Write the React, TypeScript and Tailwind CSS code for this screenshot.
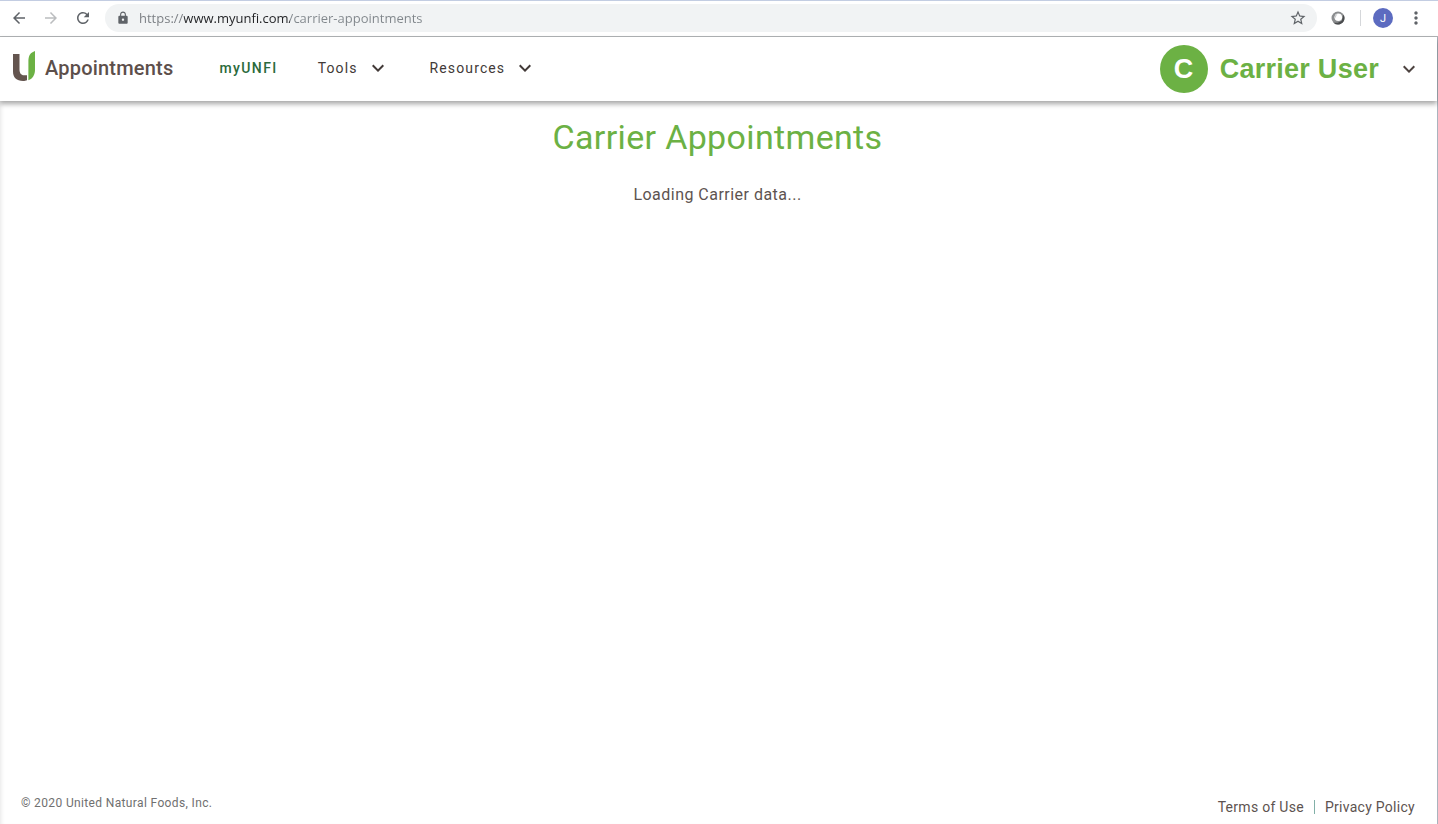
import {
  MdArrowBack,
  MdArrowForward,
  MdKeyboardArrowDown,
  MdLock,
  MdMoreVert,
  MdRefresh,
  MdStarBorder,
} from "react-icons/md";

// Two-leaf "U" mark
const Logo = () => (
  <svg width="24" height="34" viewBox="0 1 24 34" aria-hidden="true">
    <path
      d="M1 4h6.500v15.500c0 3.400 1.500 5.800 4.500 5.800h3v4.900c-1.200.5-2.300.8-4 .8C4.600 31 1 27.500 1 21.500z"
      fill="#64554f"
    />
    <path
      d="M23 1v18.500c0 5.500-2.200 9-6.600 10.800V11C16.400 5.500 18.500 2.500 23 1z"
      fill="#6cb144"
    />
  </svg>
);

const Extension = () => (
  <svg width="14" height="14" viewBox="0 0 14 14" aria-hidden="true">
    <circle cx="7" cy="7" r="6.500" fill="#8b8d8f" />
    <path d="M2.500 11.700A6.500 6.500 0 0 0 13.400 6l-1-2.500-1.600 6.300-4 2z" fill="#4a4c4e" />
    <circle cx="7.300" cy="6.200" r="3.800" fill="#fff" />
    <path d="M4 7.500l2.500-4.800A3.800 3.800 0 0 0 4 7.500z" fill="#c8cacc" />
  </svg>
);

// Address bar and browser buttons
const BrowserBar = () => (
  <div className="flex h-[37px] items-center border-t border-b border-t-[#c3cde2] border-b-[#b0b3b5] bg-white pb-px pl-2.5 pr-3 text-[#5f6368]">
    <div className="flex gap-3.5">
      <button aria-label="Back">
        <MdArrowBack className="size-[18px]" />
      </button>
      <button aria-label="Forward" className="text-[#bbbdbf]">
        <MdArrowForward className="size-[18px]" />
      </button>
      <button aria-label="Reload">
        <MdRefresh className="size-[18px]" />
      </button>
    </div>
    <div className="ml-[13px] flex h-7 flex-1 items-center rounded-full bg-[#f1f3f4] pl-[11px] pr-2.5">
      <MdLock className="size-3.5" />
      <input
        aria-label="Address"
        defaultValue="https://www.myunfi.com/carrier-appointments"
        className="ml-[9px] h-5 flex-1 bg-[linear-gradient(to_right,#777b80_45px,#202124_45px,#202124_151px,#80868b_151px)] bg-clip-text font-['Open_Sans',sans-serif] text-[13px] text-transparent outline-none"
      />
      <button aria-label="Bookmark">
        <MdStarBorder className="size-[18px]" />
      </button>
    </div>
    <button aria-label="Extension" className="ml-3.5">
      <Extension />
    </button>
    <div className="ml-[15px] mr-3 h-4 w-px bg-[#d5d7da]" />
    <button className="grid size-5 place-items-center rounded-full bg-[#5c6bc0] text-[11px] leading-none text-white">
      J
    </button>
    <button aria-label="Menu" className="ml-[13px]">
      <MdMoreVert className="size-5" />
    </button>
  </div>
);

const Header = () => (
  <header className="relative flex h-16 items-center bg-white pl-3 pr-4 shadow-[0_3px_5px_rgba(0,0,0,0.350)]">
    <a href="#" className="flex items-center gap-[9px] pb-0.5 text-xl font-medium tracking-[0.01em] text-[#5d4f4b]">
      <Logo />
      Appointments
    </a>
    <nav className="ml-[46px] flex items-center pb-0.5 text-sm text-[#423a38]">
      <a href="#" className="font-medium tracking-widest text-[#2b6a3b]">
        myUNFI
      </a>
      <button className="ml-10 flex items-center gap-2 tracking-[0.08em]">
        Tools
        <MdKeyboardArrowDown className="size-6" />
      </button>
      <button className="ml-10 flex items-center gap-2 tracking-[0.08em]">
        Resources
        <MdKeyboardArrowDown className="size-6" />
      </button>
    </nav>
    <button className="ml-auto flex items-center gap-3 font-['Liberation_Sans',Arial,sans-serif] text-[27px] font-bold tracking-[0.01em] text-[#6cb144]">
      <span className="grid size-12 place-items-center rounded-full bg-[#6cb144] text-white">C</span>
      Carrier User
      <MdKeyboardArrowDown className="ml-1.5 size-6 text-[#4d4340]" />
    </button>
  </header>
);

const App = () => (
  <div className="flex min-h-screen flex-col bg-white font-[Roboto,sans-serif]">
    <BrowserBar />
    <div className="flex flex-1 flex-col border-r border-[#a9b4be]">
      <Header />
      <div className="flex flex-1 flex-col shadow-[inset_4px_0_4px_-3px_rgba(0,0,0,0.100)]">
        <main className="flex-1 pl-5 pr-[22px] pt-3 text-center">
          <h1 className="text-[34px] leading-[48px] tracking-[0.01em] text-[#6cb144]">Carrier Appointments</h1>
          <p className="mt-5 text-base leading-7 tracking-[0.03em] text-[#5d5350]">Loading Carrier data...</p>
        </main>
        <footer className="flex items-center justify-between pl-[21px] pr-[22px] pb-[5px] text-[#5d5350]">
          <small className="pb-2 text-xs tracking-[0.03em] text-[#707070]">© 2020 United Natural Foods, Inc.</small>
          <div className="flex items-center gap-2.5 text-sm tracking-[0.02em]">
            <a href="#">Terms of Use</a>
            <span className="h-3.5 w-px bg-[#82b0a8]" />
            <a href="#">Privacy Policy</a>
          </div>
        </footer>
      </div>
    </div>
  </div>
);

export default App;
